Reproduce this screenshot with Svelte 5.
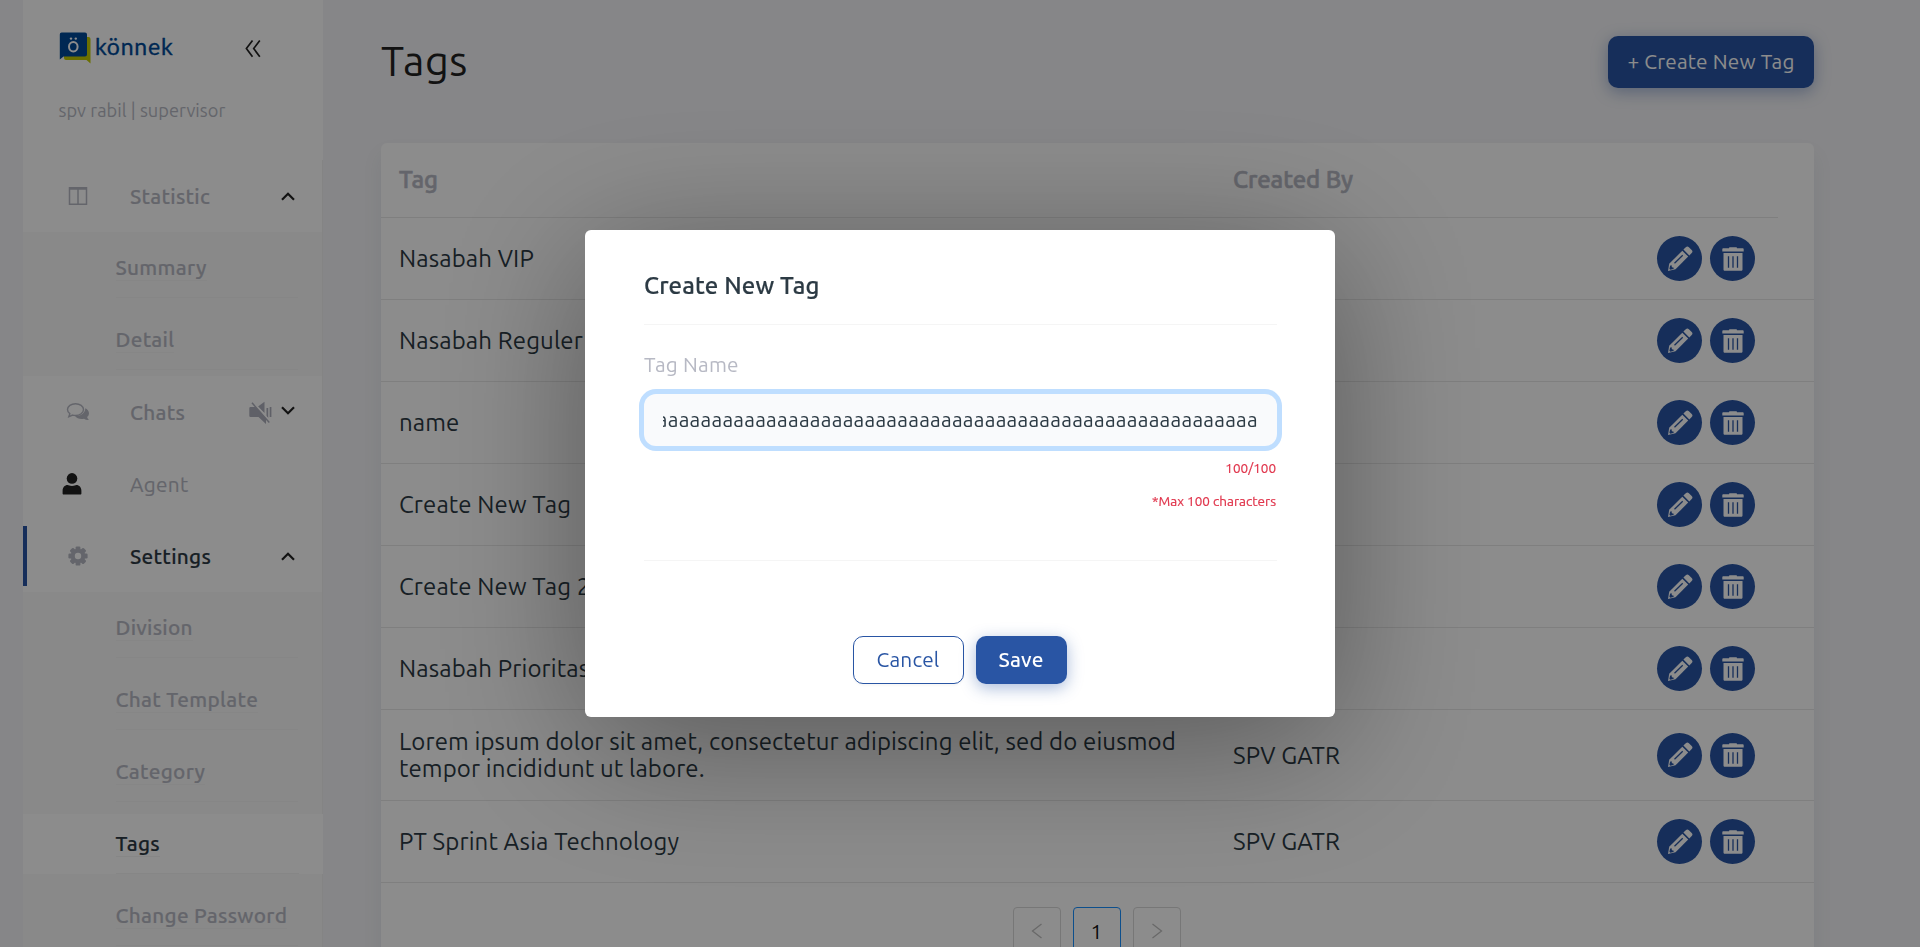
<script>
  const stats = [{ name: 'Summary' }, { name: 'Detail' }];
  const settings = [
    { name: 'Division' },
    { name: 'Chat Template' },
    { name: 'Category' },
    { name: 'Tags', active: true },
    { name: 'Change Password' }
  ];
  const rows = [
    { lines: ['Nasabah VIP'], by: '' },
    { lines: ['Nasabah Reguler'], by: '' },
    { lines: ['name'], by: '' },
    { lines: ['Create New Tag'], by: '' },
    { lines: ['Create New Tag 2'], by: '' },
    { lines: ['Nasabah Prioritas'], by: '' },
    {
      lines: ['Lorem ipsum dolor sit amet, consectetur adipiscing elit, sed do eiusmod', 'tempor incididunt ut labore.'],
      by: 'SPV GATR'
    },
    { lines: ['PT Sprint Asia Technology'], by: 'SPV GATR' }
  ];
  const value = 'a'.repeat(100);

  // Keeps the end of a long value in view.
  function showEnd(node) {
    node.scrollLeft = node.scrollWidth;
  }
</script>

{#snippet chevron(down)}
  <svg class="chev" class:down width="14" height="9" viewBox="0 0 14 9"><path d="M1 7.8 7 1.8l6 6" fill="none" stroke="#222" stroke-width="2.2" /></svg>
{/snippet}

<div class="app">
  <aside>
    <div class="top">
      <div class="brand">
        <svg width="33" height="33" viewBox="0 0 33 33">
          <path d="M5 5h24.500a2 2 0 0 1 2 2v24.500l-4-3.500H7a2 2 0 0 1-2-2z" fill="#c3cb00" />
          <path d="M3 .5h23a2 2 0 0 1 2 2v20a2 2 0 0 1-2 2H4.500L.8 27.500V2.500A2 2 0 0 1 3 .5z" fill="#004a98" />
          <ellipse cx="14.300" cy="14.700" rx="4.300" ry="4.700" fill="none" stroke="#fff" stroke-width="2" />
          <circle cx="12" cy="6.600" r="1.200" fill="#fff" /><circle cx="16.800" cy="6.600" r="1.200" fill="#fff" />
        </svg>
        <span class="word">könnek</span>
      </div>
      <svg class="fold" width="16" height="18" viewBox="0 0 16 18"><path d="M7.500.6 1.400 8.600l6.100 8.100M14.800.6 8.700 8.600l6.100 8.100" fill="none" stroke="#222" stroke-width="1.700" /></svg>
    </div>
    <div class="user">spv rabil | supervisor</div>

    <nav>
      <div class="item">
        <span class="ico"><svg width="20" height="18" viewBox="0 0 20 18"><path d="M1.500.8h17v16.400h-17zM1 2h18M10 1v16" fill="none" stroke="#b7b9c4" stroke-width="1.500" /></svg></span>
        <span class="t">Statistic</span>
        {@render chevron(false)}
      </div>
      <div class="sub">
        {#each stats as s}
          <div class="subitem"><div class="rule"><span class="t">{s.name}</span></div></div>
        {/each}
      </div>
      <div class="item">
        <span class="ico"><svg width="24" height="20" viewBox="0 0 24 20">
          <path d="M9.500 1.700c4.400 0 8 2.600 8 5.900s-3.600 5.900-8 5.900c-1 0-1.900-.1-2.800-.4L2.800 14.700l1-3C2.300 10.700 1.500 9.200 1.500 7.600c0-3.300 3.600-5.900 8-5.900z" fill="none" stroke="#b7b9c4" stroke-width="1.400" />
          <path d="M19.300 6.200c2 .9 3.700 2.800 3.700 5 0 1.500-.7 2.900-1.900 3.900.3 1 .9 1.900 1.500 2.500.2.300 0 .6-.4.500-1.700-.1-3.100-.6-4.200-1.300-.8.200-1.600.300-2.400.300-2.800 0-5.300-1.200-6.500-3 5.300.2 10.200-3 10.200-7.900z" fill="#b7b9c4" />
        </svg></span>
        <span class="t">Chats</span>
        <svg class="mute" width="23" height="23" viewBox="0 0 23 23">
          <path d="M1.500 6h5L17 17.500V23L9.500 16h-8A1.200 1.200 0 0 1 .3 14.800V7.200A1.200 1.200 0 0 1 1.500 6zM9 5.500 15.500.7V12zM17.500 7h1.700v10l-1.700-1.500zM20.700 6h1.700v10h-1.700z" fill="#adafbc" />
          <path d="M3 1.800 20.300 21.500" stroke="#adafbc" stroke-width="1.500" /><path d="M5 1.500 21.500 20.300" stroke="#fff" stroke-width="1.100" />
        </svg>
        {@render chevron(true)}
      </div>
      <div class="item light">
        <span class="ico agent"><svg width="20" height="22" viewBox="0 0 20 22"><circle cx="10" cy="5.400" r="5.300" fill="#222" /><path d="M.6 20.500v-2.700c0-3.400 2.200-5.700 5-5.700 1 0 2 .8 4.400.8s3.400-.8 4.400-.8c2.800 0 5 2.300 5 5.700v2.700c0 .6-.4 1-1 1H1.600c-.6 0-1-.4-1-1z" fill="#222" /></svg></span>
        <span class="t">Agent</span>
      </div>
      <div class="item current">
        <span class="ico"><svg width="20" height="20" viewBox="0 0 20 20"><g fill="#b7b9c4">
          {#each [0, 45, 90, 135] as a}<rect x="7.600" y=".4" width="4.800" height="19.200" rx="1.200" transform="rotate({a} 10 10)" />{/each}
          <circle cx="10" cy="10" r="7.300" /></g><circle cx="10" cy="10" r="3.200" fill="#fff" /></svg></span>
        <span class="t">Settings</span>
        {@render chevron(false)}
      </div>
      <div class="sub">
        {#each settings as s}
          <div class="subitem" class:active={s.active}><div class="rule"><span class="t">{s.name}</span></div></div>
        {/each}
      </div>
    </nav>
  </aside>

  <main>
    <header>
      <h1>Tags</h1>
      <button class="primary create">+ Create New Tag</button>
    </header>
    <section class="card">
      <div class="thead">
        <div class="c1">Tag</div>
        <div class="c2">Created By</div>
      </div>
      {#each rows as r}
        <div class="row" class:tall={r.lines.length > 1}>
          <div class="c1">{#each r.lines as l}<div><span class="t">{l}</span></div>{/each}</div>
          <div class="c2">{r.by}</div>
          <div class="acts">
            <span class="round"><svg width="26" height="26" viewBox="0 0 26 26">
              <path d="M15.300 4.700 21.200 10.600 8.500 23.300 1 25l1.200-7.200z" fill="#fff" />
              <path d="M16.400 3.600 18.800 1.300a2.200 2.200 0 0 1 3.100 0L24.700 4a2.200 2.200 0 0 1 0 3.100l-2.400 2.400z" fill="#fff" />
              <path d="M7.500 17.200 15.700 9.300" stroke="#2955a4" stroke-width="1.300" /><path d="M4.500 18.900c-.2 1.700.8 2.800 2.700 2.900l-1 1.200-2.900.7-.9-.9.700-3z" fill="#2955a4" />
            </svg></span>
            <span class="round"><svg width="22" height="24" viewBox="0 0 22 24">
              <path d="M7 1.300C7 .6 7.400.3 8 .3h6c.6 0 1 .3 1 1h5.500c.7 0 1.200.4 1.200 1v2.200H.3V2.300c0-.6.5-1 1.200-1zM1.500 6h19v16.500c0 .8-.6 1.300-1.300 1.300H2.800c-.7 0-1.300-.5-1.300-1.300z" fill="#fff" />
              <path d="M6.500 9.300v11.500M11 9.300v11.500M15.500 9.300v11.500" stroke="#2955a4" stroke-width="1.300" />
            </svg></span>
          </div>
        </div>
      {/each}
      <div class="pager">
        <span><svg width="12" height="16" viewBox="0 0 12 16"><path d="M10.500 1 1.500 8l9 7" fill="none" stroke="#bfbfbf" stroke-width="1.300" /></svg></span>
        <span class="on">1</span>
        <span><svg width="12" height="16" viewBox="0 0 12 16"><path d="M1.500 1l9 7-9 7" fill="none" stroke="#bfbfbf" stroke-width="1.300" /></svg></span>
      </div>
    </section>
  </main>
</div>

<div class="overlay">
  <div class="modal">
    <h2>Create New Tag</h2>
    <div class="body">
      <div class="label">Tag Name</div>
      <input class="field" {value} readonly use:showEnd />
      <div class="note">100/100</div>
      <div class="note second">*Max 100 characters</div>
    </div>
    <div class="foot">
      <button class="cancel">Cancel</button>
      <button class="primary save">Save</button>
    </div>
  </div>
</div>

<style>
  :global(body) { overflow: hidden; background: #f4f4f7; }
  * { box-sizing: border-box; }
  .app, .overlay { font-family: Ubuntu, 'Noto Sans', 'Open Sans', sans-serif; font-size: 20.800px; color: #2c3a44; letter-spacing: .12px; }
  .app { display: flex; height: 947px; overflow: hidden; background: #f4f4f7; padding-left: 23px; }
  .t { display: inline-block; white-space: nowrap; }
  button { font: inherit; letter-spacing: .18px; border: 0; padding: 0; display: flex; align-items: center; justify-content: center; }
  svg { display: block; flex: none; }

  aside { width: 300px; flex: none; background: #fff; }
  .top { display: flex; justify-content: space-between; padding: 32px 62px 0 36px; height: 96px; }
  .brand { display: flex; gap: 3px; }
  .word { font-family: Lato, sans-serif; font-size: 23px; line-height: 28px; letter-spacing: .8px; color: #004a98; font-weight: 400; -webkit-text-stroke: .3px #004a98; }
  .fold { margin-top: 8px; }
  .user { height: 64px; padding: 2px 0 0 35.500px; line-height: 24px; font-size: 18.200px; color: #b7b9c4; letter-spacing: .05px; }
  nav { border-right: 1px solid #f0f0f0; background: #fff; height: 787px; letter-spacing: .28px; }
  .item { height: 72px; display: flex; align-items: center; padding: 0 27px 0 36px; color: #b7b9c4; font-weight: 500; position: relative; -webkit-text-stroke: .15px; }
  .item .ico { width: 71px; display: flex; justify-content: center; padding-right: 33.500px; }
  .item .ico.agent { padding-right: 45px; }
  .item.light { font-weight: 400; }
  .item.current { color: #2c3a44; }
  .item.current::before { content: ''; position: absolute; left: 0; top: 6px; width: 4px; height: 60px; background: #2955a4; }
  .chev { margin-left: auto; }
  .chev.down { transform: rotate(180deg); margin-left: 9px; margin-top: -4px; }
  .mute { margin-left: auto; }
  .sub { background: #fafafa; display: flow-root; }
  .subitem { height: 60px; margin: 12px 0; padding: 0 24px 0 92.500px; color: #b7b9c4; font-weight: 500; -webkit-text-stroke: .15px; }
  .sub .subitem:first-child { margin-top: 6px; }
  .sub .subitem:last-child { margin-bottom: 6px; }
  .rule { height: 60px; border-bottom: 1px solid #f5f5f5; display: flex; align-items: flex-start; padding-top: 17px; }
  .rule .t { line-height: 25px; border-bottom: 1px solid #f5f5f5; }
  .subitem.active { background: #fff; color: #2c3a44; margin-right: -1px; }

  main { flex: none; width: 1491px; padding-left: 58px; }
  header { height: 143px; display: flex; justify-content: space-between; padding-top: 36px; }
  h1 { margin: 0; font-weight: 400; font-size: 41.600px; line-height: 50px; color: #222; letter-spacing: .5px; }
  .primary { background: #2955a4; color: #fff; border-radius: 10px; box-shadow: 0 4px 16px rgba(41, 85, 164, .4); font-weight: 500; }
  .create { width: 206px; height: 52px; font-weight: 400; padding-bottom: 2px; }
  .card { background: #fff; border-radius: 6px; height: 900px; box-shadow: 0 12px 20px rgba(44, 80, 110, .08); font-size: 24px; letter-spacing: .12px; }
  .thead { height: 75px; width: 1397px; border-bottom: 1px solid #e8e8e8; display: flex; align-items: center; color: #b7b9c4; font-weight: 500; letter-spacing: -.08px; -webkit-text-stroke: .6px #b7b9c4; padding-bottom: 2px; }
  .row { height: 82px; border-bottom: 1px solid #e8e8e8; display: flex; align-items: center; line-height: 27px; }
  .row.tall { height: 91px; }
  .c1 { width: 852px; padding-left: 18px; flex: none; }
  .c2 { width: 424px; flex: none; }
  .acts { display: flex; gap: 8px; }
  .round { width: 45px; height: 45px; border-radius: 50%; background: #2955a4; display: flex; align-items: center; justify-content: center; }
  .pager { display: flex; justify-content: center; gap: 12px; padding: 24px 2px 0 0; font-size: 20.800px; }
  .pager span { width: 48px; height: 48px; border: 1px solid #d9d9d9; border-radius: 4px; display: flex; align-items: center; justify-content: center; }
  .pager .on { border-color: #1890ff; color: #111; }

  .overlay { position: fixed; inset: 0; background: rgba(0, 0, 0, .45); display: flex; justify-content: center; align-items: flex-start; padding-top: 230px; }
  .modal { width: 750px; height: 487px; background: #fff; border-radius: 6px; padding: 0 58px 0 59px; box-shadow: 0 25px 150px rgba(0, 0, 0, .38); }
  h2 { margin: 0; height: 95px; padding-top: 41px; font-size: 24px; letter-spacing: .15px; line-height: 30px; font-weight: 500; border-bottom: 1px solid #f5f5f5; -webkit-text-stroke: .2px #2c3a44; }
  .body { height: 236px; border-bottom: 1px solid #f5f5f5; padding-top: 27px; }
  .label { color: #b7b9c4; line-height: 26px; height: 42px; letter-spacing: .2px; }
  .field { display: block; width: 100%; height: 52px; border: 0; outline: 0; font: inherit; color: inherit; letter-spacing: .24px; border-radius: 12px; background: #f9fafc; box-shadow: 0 0 0 5px #bfdeff; padding: 0 19px 2px; }
  .note { text-align: right; color: #e0344b; font-size: 13.500px; letter-spacing: 0; line-height: 20px; padding: 12px 1px 0 0; height: 33px; -webkit-text-stroke: .2px #e0344b; }
  .foot { display: flex; justify-content: center; gap: 12px; padding: 75px 2px 0 0; }
  .foot button { height: 48px; padding-bottom: 1px; }
  .cancel { width: 111px; border: 1px solid #2955a4; border-radius: 10px; background: #fff; color: #2955a4; box-shadow: 0 2px 2px rgba(0, 0, 0, .03); }
  .save { width: 91px; }
</style>
